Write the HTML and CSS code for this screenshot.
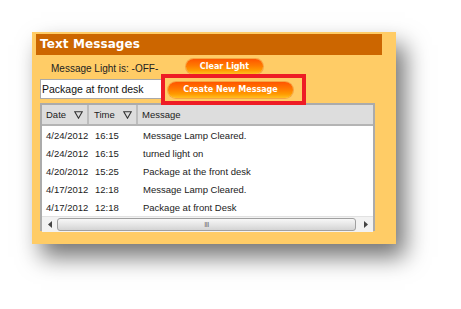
FILE: index.html
```html
<!DOCTYPE html>
<html>
<head>
<meta charset="utf-8">
<link rel="stylesheet" href="styles.css">
</head>
<body>
<div class="panel">
  <div class="titlebar">Text Messages</div>
  <div class="row1">
    <span class="label">Message Light is: -OFF-</span>
    <span class="btn btn-clear">Clear Light</span>
  </div>
  <div class="row2">
    <div class="input">Package at front desk</div>
    <div class="highlight"><span class="btn btn-create">Create New Message</span></div>
  </div>
  <div class="grid">
    <div class="ghead">
      <div class="hc c-date">Date <svg class="sort" width="9" height="8" viewBox="0 0 9 8"><path d="M0.8 0.8 H8.2 L4.5 7.2 Z" fill="none" stroke="#333" stroke-width="1.1"/></svg></div>
      <div class="hc c-time">Time <svg class="sort" width="9" height="8" viewBox="0 0 9 8"><path d="M0.8 0.8 H8.2 L4.5 7.2 Z" fill="none" stroke="#333" stroke-width="1.1"/></svg></div>
      <div class="hc c-msg">Message</div>
    </div>
    <div class="gbody">
      <div class="grow"><span class="c-date">4/24/2012</span><span class="c-time">16:15</span><span class="c-msg">Message Lamp Cleared.</span></div>
      <div class="grow"><span class="c-date">4/24/2012</span><span class="c-time">16:15</span><span class="c-msg">turned light on</span></div>
      <div class="grow"><span class="c-date">4/20/2012</span><span class="c-time">15:25</span><span class="c-msg">Package at the front desk</span></div>
      <div class="grow"><span class="c-date">4/17/2012</span><span class="c-time">12:18</span><span class="c-msg">Message Lamp Cleared.</span></div>
      <div class="grow"><span class="c-date">4/17/2012</span><span class="c-time">12:18</span><span class="c-msg">Package at front Desk</span></div>
    </div>
    <div class="hscroll">
      <div class="arrow"><svg width="4" height="7" viewBox="0 0 4 7"><path d="M4 0 L0 3.5 L4 7 Z" fill="#444"/></svg></div>
      <div class="thumb"><span class="grip">III</span></div>
      <div class="arrow"><svg width="4" height="7" viewBox="0 0 4 7"><path d="M0 0 L4 3.5 L0 7 Z" fill="#444"/></svg></div>
    </div>
  </div>
</div>
</body>
</html>
```

FILE: styles.css
```css
html, body {
  margin: 0;
  padding: 0;
  background: #ffffff;
}
body {
  width: 461px;
  height: 309px;
  overflow: hidden;
  padding: 32px 0 0 32px;
  box-sizing: border-box;
  font-family: "Liberation Sans", Arial, sans-serif;
}
.panel {
  width: 364px;
  height: 212px;
  box-sizing: border-box;
  background: #ffcc66;
  padding: 2px 14px 0 4px;
  box-shadow: 9px 13px 22px rgba(0, 0, 0, 0.55);
  display: flex;
  flex-direction: column;
}
.titlebar {
  height: 21px;
  background: #cc6600;
  color: #ffffff;
  font-family: "DejaVu Sans", Verdana, sans-serif;
  font-weight: bold;
  font-size: 12px;
  line-height: 21px;
  padding-left: 4px;
  letter-spacing: 0.1px;
}
.row1 {
  margin-top: 4px;
  height: 15px;
  display: flex;
  align-items: center;
  padding-left: 15px;
}
.label {
  font-size: 10px;
  color: #222;
  width: 135px;
  padding-top: 3px;
}
.btn {
  display: inline-flex;
  align-items: center;
  justify-content: center;
  height: 15px;
  border-radius: 8px;
  color: #fff;
  font-family: "DejaVu Sans", Verdana, sans-serif;
  font-weight: bold;
  font-size: 8px;
  background: linear-gradient(#ff5500 0%, #ff7a00 45%, #ff9a00 75%, #ffc020 100%);
  box-shadow: 0 0 0 1px rgba(230, 90, 0, 0.35);
}
.btn-clear {
  width: 77px;
}
.btn-create {
  width: 125px;
  height: 16px;
}
.row2 {
  margin-top: 5px;
  height: 20px;
  display: flex;
  align-items: center;
  padding-left: 4px;
}
.input {
  width: 119px;
  height: 18px;
  background: #fff;
  border: 1px solid #a9a9a9;
  border-right: none;
  font-size: 10.5px;
  line-height: 19px;
  padding-left: 1px;
  color: #111;
  white-space: nowrap;
  overflow: hidden;
}
.highlight {
  position: relative;
  z-index: 2;
  width: 134px;
  height: 23px;
  border: 4px solid #ee1c25;
  box-sizing: content-box;
  padding: 0 0 0 3px;
  display: flex;
  align-items: center;
  margin-top: 1px;
}
.grid {
  margin: 4px 0 0 4px;
  width: 335px;
  height: 128px;
  box-sizing: border-box;
  border: 2px solid #ababab;
  background: #fff;
  display: flex;
  flex-direction: column;
  font-size: 9.5px;
  color: #222;
}
.ghead {
  height: 19px;
  background: #dddddd;
  border-bottom: 2px solid #b4b4b4;
  display: flex;
  flex: none;
}
.hc {
  display: flex;
  align-items: center;
  box-sizing: border-box;
  padding-left: 4px;
}
.ghead .c-date {
  width: 47px;
  border-right: 2px solid #bdbdbd;
}
.ghead .c-time {
  width: 49px;
  border-right: 2px solid #bdbdbd;
  padding-left: 5px;
}
.ghead .c-msg {
  padding-left: 4px;
}
.sort {
  margin-left: 8px;
  margin-top: 1px;
}
.gbody {
  flex: 1;
  display: flex;
  flex-direction: column;
}
.grow {
  height: 18px;
  display: flex;
  align-items: center;
  white-space: nowrap;
}
.grow .c-date {
  width: 45px;
  padding-left: 4px;
}
.grow .c-time {
  width: 47px;
  padding-left: 4px;
}
.grow .c-msg {
  padding-left: 1px;
}
.hscroll {
  height: 15px;
  flex: none;
  display: flex;
  align-items: center;
  background: #f2f2f2;
  border-top: 1px solid #e2e2e2;
}
.arrow {
  width: 15px;
  height: 15px;
  display: flex;
  align-items: center;
  justify-content: center;
  flex: none;
}
.thumb {
  flex: 1;
  height: 13px;
  margin: 0 2px 0 0;
  border: 1px solid #a0a0a0;
  border-radius: 3px;
  box-sizing: border-box;
  background: linear-gradient(#f7f7f7, #e6e6e6 50%, #d4d4d4);
  display: flex;
  align-items: center;
  justify-content: center;
}
.grip {
  font-size: 7px;
  color: #666;
  letter-spacing: -0.5px;
  line-height: 7px;
}
```
